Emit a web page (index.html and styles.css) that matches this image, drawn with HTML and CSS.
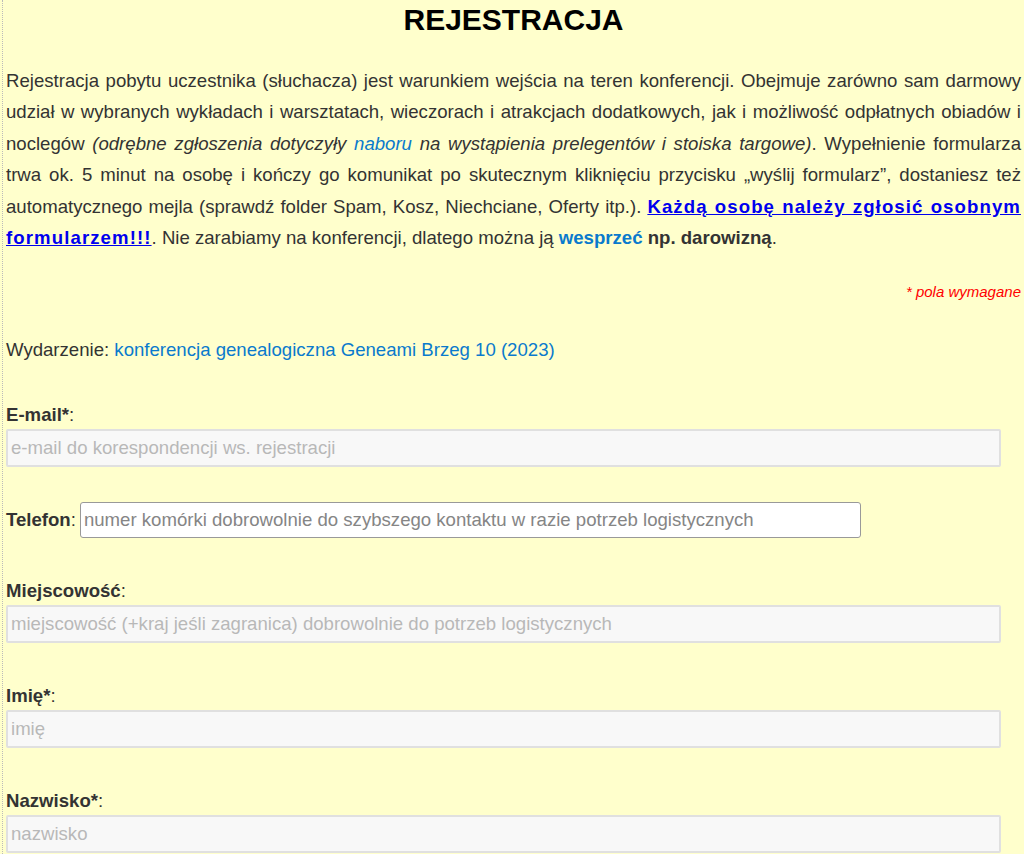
FILE: index.html
```html
<!DOCTYPE html>
<html lang="pl">
<head>
<meta charset="utf-8">
<title>Rejestracja</title>
<link rel="stylesheet" href="styles.css">
</head>
<body>
<div class="page">
  <h1 class="title">REJESTRACJA</h1>
  <p class="intro">Rejestracja pobytu uczestnika (słuchacza) jest warunkiem wejścia na teren konferencji. Obejmuje zarówno sam darmowy udział w wybranych wykładach i warsztatach, wieczorach i atrakcjach dodatkowych, jak i możliwość odpłatnych obiadów i noclegów <em>(odrębne zgłoszenia dotyczyły <a class="link" href="#">naboru</a> na wystąpienia prelegentów i stoiska targowe)</em>. Wypełnienie formularza trwa ok. 5 minut na osobę i kończy go komunikat po skutecznym kliknięciu przycisku „wyślij formularz”, dostaniesz też automatycznego mejla (sprawdź folder Spam, Kosz, Niechciane, Oferty itp.). <a class="strong-link" href="#">Każdą osobę należy zgłosić osobnym formularzem!!!</a>. Nie zarabiamy na konferencji, dlatego można ją <a class="link bold" href="#">wesprzeć</a> <strong>np. darowizną</strong>.</p>
  <p class="required">* pola wymagane</p>
  <p class="event">Wydarzenie: <a class="link" href="#">konferencja genealogiczna Geneami Brzeg 10 (2023)</a></p>

  <div class="field">
    <label class="label"><b>E-mail*</b>:</label>
    <input class="input" type="text" placeholder="e-mail do korespondencji ws. rejestracji">
  </div>

  <div class="field field-inline">
    <label class="label"><b>Telefon</b>:</label>
    <input class="input input-white" type="text" placeholder="numer komórki dobrowolnie do szybszego kontaktu w razie potrzeb logistycznych">
  </div>

  <div class="field">
    <label class="label"><b>Miejscowość</b>:</label>
    <input class="input" type="text" placeholder="miejscowość (+kraj jeśli zagranica) dobrowolnie do potrzeb logistycznych">
  </div>

  <div class="field">
    <label class="label"><b>Imię*</b>:</label>
    <input class="input" type="text" placeholder="imię">
  </div>

  <div class="field">
    <label class="label"><b>Nazwisko*</b>:</label>
    <input class="input" type="text" placeholder="nazwisko">
  </div>
</div>
</body>
</html>
```

FILE: styles.css
```css
html, body {
  margin: 0;
  padding: 0;
  background: #ffffcc;
}

body {
  font-family: "Liberation Sans", Arial, sans-serif;
  font-size: 18.6px;
  color: #333333;
}

.page {
  margin-left: 2px;
  border-left: 1px dotted #bbbbbb;
  padding: 0 3px 0 3px;
  min-height: 854px;
  box-sizing: border-box;
}

.title {
  margin: 0;
  padding-top: 2px;
  font-size: 30px;
  line-height: 36px;
  font-weight: bold;
  text-align: center;
  color: #000000;
}

.intro {
  margin: 27px 0 0 0;
  line-height: 31.4px;
  text-align: justify;
}

.intro em {
  font-style: italic;
}

.link {
  color: #0a7acc;
  text-decoration: none;
}

.bold {
  font-weight: bold;
}

.strong-link {
  color: #0000ee;
  font-weight: bold;
  text-decoration: underline;
  letter-spacing: 1.1px;
}

.intro strong {
  font-weight: bold;
}

.required {
  margin: 30px 0 0 0;
  line-height: 18px;
  text-align: right;
  font-size: 15px;
  font-style: italic;
  color: #ff0000;
}

.event {
  margin: 38px 0 0 0;
  line-height: 22px;
}

.field {
  margin-top: 43px;
}

.field + .field {
  margin-top: 42px;
}

.field-inline,
.field + .field-inline {
  margin-top: 35px;
}

.label {
  display: block;
  line-height: 22px;
  margin-bottom: 3px;
}

.label b {
  font-weight: bold;
}

.input {
  display: block;
  box-sizing: border-box;
  width: 98%;
  height: 38px;
  margin: 0;
  padding: 0 3px;
  font-family: "Liberation Sans", Arial, sans-serif;
  font-size: 18.6px;
  color: #333333;
  background: #f8f8f8;
  border: 2px solid #e0e0e0;
  border-radius: 2px;
  outline: none;
}

.input::placeholder {
  color: #b8b8b8;
}

.field-inline {
  display: flex;
  align-items: center;
  gap: 4px;
}

.field-inline .label {
  margin-bottom: 0;
}

.input-white {
  width: 77%;
  height: 36px;
  padding: 0 3px;
  background: #ffffff;
  border: 1px solid #999999;
  border-radius: 3px;
}

.input-white::placeholder {
  color: #858585;
}
```
